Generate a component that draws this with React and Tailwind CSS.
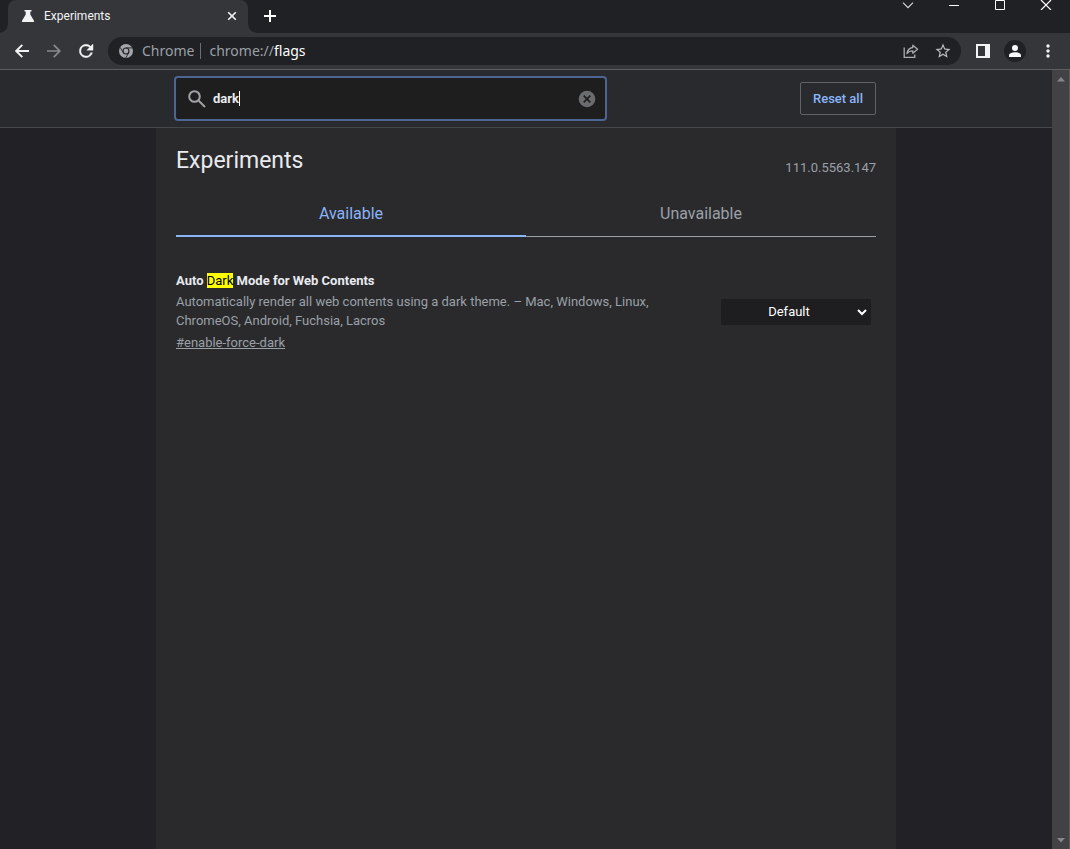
import { useState } from 'react'

function IconButton({ label, className = '', children }) {
  return (
    <button
      type="button"
      aria-label={label}
      className={`flex shrink-0 items-center justify-center ${className}`}
    >
      {children}
    </button>
  )
}

function TabStrip() {
  return (
    <div className="flex h-[33px] bg-[#202124]">
      <div className="relative ml-2 flex h-full w-60 items-center rounded-t-lg bg-[#35363a] pb-px pl-3 pr-2">
        <span className="absolute bottom-0 -left-2 size-2 bg-[radial-gradient(circle_at_0_0,#202124_7px,#35363a_8px)]" />
        <span className="absolute bottom-0 -right-2 size-2 bg-[radial-gradient(circle_at_100%_0,#202124_7px,#35363a_8px)]" />
        <svg width="16" height="16" viewBox="0 0 16 16" fill="#f1f3f4">
          <path d="M4.5 2h7v1.6h-1.2v3L14 12.7q.5 1.3-.7 1.3H2.7q-1.2 0-.7-1.3l3.7-6.1v-3H4.5z" />
        </svg>
        <span className="ml-2 flex-1 text-xs text-[#f1f3f4]">Experiments</span>
        <IconButton label="Close tab" className="size-4">
          <svg width="10" height="10" viewBox="0 0 10 10" stroke="#f1f3f4" strokeWidth="1.6">
            <path d="M1.2 1.2l7.6 7.6M8.8 1.2L1.2 8.8" />
          </svg>
        </IconButton>
      </div>
      <IconButton label="New tab" className="ml-2 w-7 pb-px">
        <svg width="12" height="12" viewBox="0 0 12 12" stroke="#fff" strokeWidth="2">
          <path d="M6 0v12M0 6h12" />
        </svg>
      </IconButton>
      <div className="ml-auto flex items-start pr-px">
        <IconButton label="Search tabs" className="h-[10px] w-[46px]">
          <svg width="12" height="7" viewBox="0 0 12 7" fill="none" stroke="#dadce0" strokeWidth="1.1">
            <path d="M1 .7l5 5 5-5" />
          </svg>
        </IconButton>
        <IconButton label="Minimize" className="h-[11px] w-[46px]">
          <svg width="10" height="1" viewBox="0 0 10 1" fill="#fff">
            <path d="M0 0h10v1H0z" />
          </svg>
        </IconButton>
        <IconButton label="Maximize" className="h-[10px] w-[46px]">
          <svg width="10" height="10" viewBox="0 0 10 10" fill="none" stroke="#fff">
            <path d="M.5 .5h9v9h-9z" />
          </svg>
        </IconButton>
        <IconButton label="Close window" className="h-[10px] w-[46px]">
          <svg width="12" height="10" viewBox="0 0 12 10" stroke="#fff" strokeWidth="1.2">
            <path d="M1 0l10 10M11 0L1 10" />
          </svg>
        </IconButton>
      </div>
    </div>
  )
}

function Toolbar() {
  return (
    <div className="flex h-[37px] items-center border-b border-[#5d5e60] bg-[#35363a] pl-2 pr-2">
      <IconButton label="Back" className="w-7">
        <svg width="14" height="14" viewBox="0 0 14 14" fill="none" stroke="#f1f3f4" strokeWidth="1.9">
          <path d="M14 7H1.5M7.3 .8L1.2 7l6.1 6.2" />
        </svg>
      </IconButton>
      <IconButton label="Forward" className="ml-1 w-7">
        <svg width="14" height="14" viewBox="0 0 14 14" fill="none" stroke="#88898c" strokeWidth="1.7">
          <path d="M0 7h12.5M6.7 .8L12.8 7l-6.1 6.2" />
        </svg>
      </IconButton>
      <IconButton label="Reload" className="ml-1 w-7">
        <svg width="20" height="20" viewBox="0 0 24 24" fill="#f1f3f4" stroke="#f1f3f4" strokeWidth=".5">
          <path d="M17.65 6.35A7.96 7.96 0 0 0 12 4a8 8 0 1 0 7.73 10h-2.2A5.99 5.99 0 1 1 12 6c1.66 0 3.14.69 4.22 1.78L13 11h7.4V3.6z" />
        </svg>
      </IconButton>
      <div className="ml-2 flex h-7 flex-1 items-center rounded-full bg-[#202124] pl-[11px] pr-1.5">
        <svg width="14" height="14" viewBox="0 0 14 14">
          <circle cx="7" cy="7" r="7" fill="#a4a7ab" />
          <circle cx="7" cy="7" r="3.5" fill="#202124" />
          <circle cx="7" cy="7" r="2.4" fill="#a4a7ab" />
          <path d="M7 3.9h6.4M4.2 8.6L1.1 3.3M9.8 8.6L6.7 14" stroke="#202124" strokeWidth=".9" />
        </svg>
        <label
          htmlFor="address"
          className="ml-[9px] font-['Noto_Sans',sans-serif] text-sm text-[#9aa0a6]"
        >
          Chrome
        </label>
        <span className="mx-1.5 h-4 w-px bg-[#6b6e72]" />
        <button
          id="address"
          type="button"
          className="flex-1 pl-0.5 text-left font-['Noto_Sans',sans-serif] text-sm text-[#9aa0a6]"
        >
          chrome://<span className="text-white">flags</span>
        </button>
        <IconButton label="Share" className="w-6">
          <svg width="16" height="16" viewBox="0 0 16 16" fill="none" stroke="#a9acb0" strokeWidth="1.3">
            <path d="M1.2 4.5v9.8h10.6v-2.8" />
            <path d="M9.8 2.2l4.8 4-4.8 4V7.9c-2.8 0-4.6.9-5.9 2.7.5-3.2 2.3-5.6 5.9-6.1z" strokeLinejoin="round" />
          </svg>
        </IconButton>
        <IconButton label="Bookmark this tab" className="ml-2 w-6">
          <svg width="18" height="18" viewBox="0 0 24 24" fill="#b9bcc0">
            <path d="M22 9.24l-7.19-.62L12 2 9.19 8.63 2 9.24l5.46 4.73L5.82 21 12 17.27 18.18 21l-1.63-7.03zM12 15.4l-3.76 2.27 1-4.28-3.32-2.88 4.38-.38L12 6.1l1.71 4.04 4.38.38-3.32 2.88 1 4.28z" />
          </svg>
        </IconButton>
      </div>
      <IconButton label="Side panel" className="ml-2 w-7">
        <svg width="14" height="14" viewBox="0 0 14 14" fill="#f1f3f4" fillRule="evenodd">
          <path d="M0 0h14v14H0zM2 2v10h7V2z" />
        </svg>
      </IconButton>
      <IconButton label="Profile" className="ml-[7px] size-[22px] rounded-full bg-[#202124]">
        <svg width="12" height="12" viewBox="0 0 12 12" fill="#f8f9fa">
          <circle cx="6" cy="3" r="3" />
          <path d="M0 12v-1.7C0 8.3 3.5 7.3 6 7.3s6 1 6 3V12z" />
        </svg>
      </IconButton>
      <IconButton label="Menu" className="ml-2 w-7">
        <svg width="4" height="14" viewBox="0 0 4 14" fill="#f1f3f4">
          <circle cx="2" cy="2" r="1.7" />
          <circle cx="2" cy="7" r="1.7" />
          <circle cx="2" cy="12" r="1.7" />
        </svg>
      </IconButton>
    </div>
  )
}

function SearchHeader({ query, setQuery }) {
  return (
    <header className="h-[58px] border-b border-[#46474a] bg-[#292a2d]">
      <div className="mx-auto flex h-full max-w-[704px] items-center justify-between pr-0.5">
        <div className="flex h-[45px] w-[433px] items-center rounded border-2 border-[#4c6593] bg-[#1e1e1f] pl-3 pr-[9px]">
          <svg width="18" height="18" viewBox="0 0 18 18" fill="none" stroke="#a0a2a5" strokeWidth="2">
            <circle cx="6.5" cy="6.5" r="5.3" />
            <path d="M10.5 10.5l6.5 6.5" />
          </svg>
          <label className="ml-[7px] flex flex-1 items-center">
            <input
              type="text"
              aria-label="Search flags"
              value={query}
              onChange={(e) => setQuery(e.target.value)}
              className="field-sizing-content font-bold text-[#e8eaed] caret-transparent outline-none"
            />
            <span className="h-[15px] w-px bg-white" />
          </label>
          <button type="button" aria-label="Clear search" onClick={() => setQuery('')}>
            <svg width="18" height="18" viewBox="0 0 18 18">
              <circle cx="9" cy="9" r="8.3" fill="#6b6c6e" />
              <path d="M5.7 5.7l6.6 6.6M12.3 5.7l-6.6 6.6" stroke="#1e1e1f" strokeWidth="1.7" />
            </svg>
          </button>
        </div>
        <button
          type="button"
          className="h-[33px] w-[76px] rounded-xs border border-[#5f6368] font-medium text-[#8ab4f8]"
        >
          Reset all
        </button>
      </div>
    </header>
  )
}

function Flag() {
  return (
    <div className="mt-[34px] flex items-center justify-between pr-[5px]">
      <div className="w-[490px]">
        <h2 className="font-bold leading-5 text-[#e8eaed]">
          Auto <mark className="bg-[#ffff00] font-normal text-black">Dark</mark> Mode for Web Contents
        </h2>
        <p className="mt-px leading-[19px] text-[#9aa0a6]">
          Automatically render all web contents using a dark theme. – Mac, Windows, Linux, ChromeOS, Android,
          Fuchsia, Lacros
        </p>
        <a href="#enable-force-dark" className="mt-1 block leading-[18px] text-[#9aa0a6] underline">
          #enable-force-dark
        </a>
      </div>
      <div className="relative">
        <select
          aria-label="Auto Dark Mode for Web Contents"
          defaultValue="Default"
          className="h-[26px] w-[150px] appearance-none bg-[#1e1e20] pr-[14px] text-center text-white [text-align-last:center]"
        >
          <option>Default</option>
          <option>Enabled</option>
          <option>Disabled</option>
        </select>
        <svg
          className="pointer-events-none absolute right-1 top-2.5"
          width="10"
          height="7"
          viewBox="0 0 10 7"
          fill="none"
          stroke="#fff"
          strokeWidth="2"
        >
          <path d="M1 1l4 4 4-4" />
        </svg>
      </div>
    </div>
  )
}

function Scrollbar() {
  return (
    <div className="flex w-[18px] flex-col items-center justify-between border-r border-[#5b5b5c] bg-[#424244] pb-1.5 pt-[7px]">
      <svg width="8" height="5" viewBox="0 0 8 5" fill="#868688">
        <path d="M4 0l4 4.5H0z" />
      </svg>
      <svg width="8" height="5" viewBox="0 0 8 5" fill="#868688">
        <path d="M0 0h8L4 4.5z" />
      </svg>
    </div>
  )
}

export default function App() {
  const [query, setQuery] = useState('dark')

  return (
    <div className="flex min-h-screen flex-col bg-[#222126] font-[Roboto,sans-serif] text-[13px]">
      <TabStrip />
      <Toolbar />
      <div className="flex flex-1">
        <div className="flex flex-1 flex-col">
          <SearchHeader query={query} setQuery={setQuery} />
          <main className="mx-auto w-full max-w-[740px] flex-1 bg-[#2a2a2d] px-5">
            <div className="flex items-end justify-between pt-[17px]">
              <h1 className="text-[23px] leading-8 text-[#e8eaed]">Experiments</h1>
              <span className="leading-[18px] text-[#9aa0a6]">111.0.5563.147</span>
            </div>
            <div role="tablist" className="mt-[13px] grid h-[47px] grid-cols-2 text-base">
              <button
                type="button"
                role="tab"
                aria-selected="true"
                className="border-b-2 border-[#8ab4f8] pt-[3px] text-[#8ab4f8]"
              >
                Available
              </button>
              <button
                type="button"
                role="tab"
                aria-selected="false"
                className="border-b border-[#9aa0a6] pt-0.5 text-[#9aa0a6]"
              >
                Unavailable
              </button>
            </div>
            <Flag />
          </main>
        </div>
        <Scrollbar />
      </div>
    </div>
  )
}
